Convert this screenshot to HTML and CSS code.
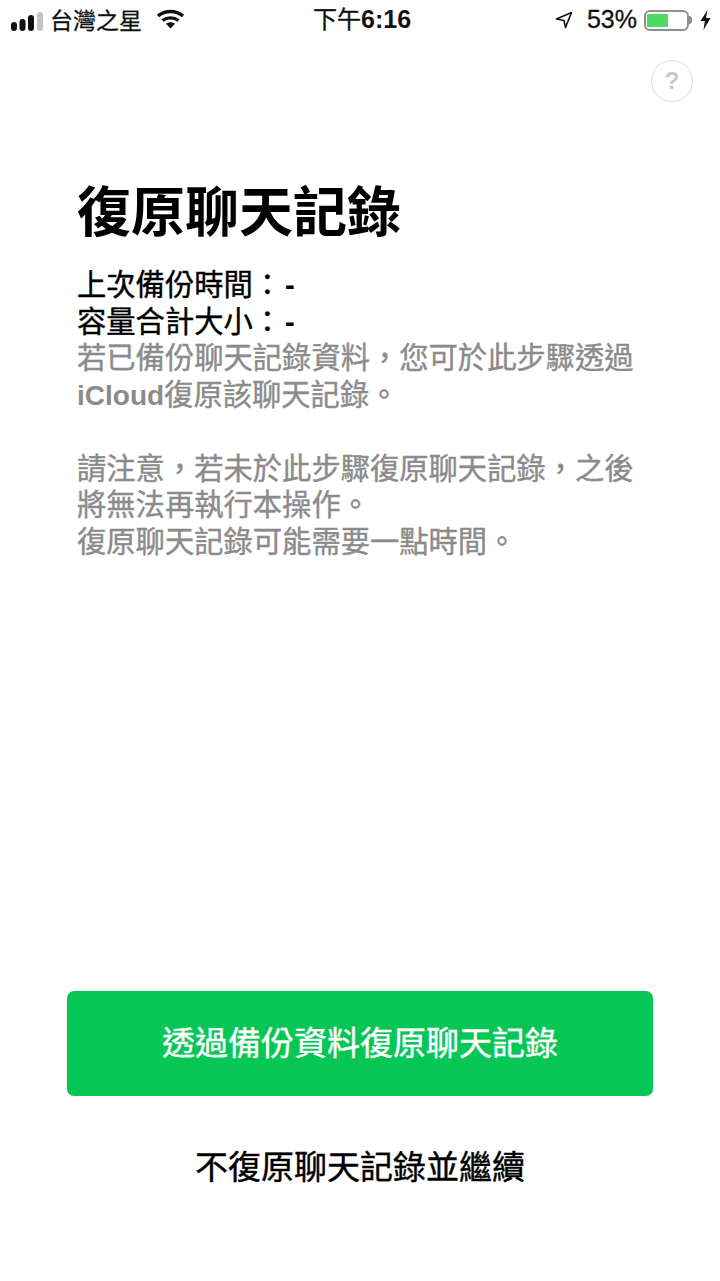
FILE: index.html
```html
<!DOCTYPE html>
<html lang="zh-Hant">
<head>
<meta charset="utf-8">
<title>復原聊天記錄</title>
<link rel="stylesheet" href="styles.css">
</head>
<body>
<div class="page">
  <header class="status">
    <div class="status-side">
      <svg class="signal" width="32" height="20" viewBox="0 0 32 20"><rect x="0" y="11" width="6" height="9" rx="3" fill="#111"/><rect x="8.500" y="8" width="6" height="12" rx="3" fill="#111"/><rect x="17" y="4" width="6" height="16" rx="3" fill="#111"/><rect x="26" y="1" width="6" height="19" rx="3" fill="#c4c4c4"/></svg>
      <span class="carrier">台灣之星</span>
      <svg class="wifi" width="27" height="20" viewBox="0 0 27 20"><path d="M1 7C8.500 1 18.500 1 26 7" fill="none" stroke="#111" stroke-width="3.400"/><path d="M5.500 11.500C10 8 17 8 21.500 11.500" fill="none" stroke="#111" stroke-width="3.400"/><path d="M9 14.800C11.500 12.800 15.500 12.800 18 14.800L13.500 19.500Z" fill="#111"/></svg>
    </div>
    <div class="clock">下午<span class="clock-digits">6:16</span></div>
    <div class="status-side status-right">
      <svg class="arrow" width="18" height="18" viewBox="0 0 18 18"><path d="M16.500 1.500L1.500 8L9 9.500L10.500 16.500Z" fill="none" stroke="#111" stroke-width="1.600" stroke-linejoin="round"/></svg>
      <span class="percent">53%</span>
      <div class="battery"><div class="level"></div></div>
      <div class="nub"></div>
      <svg class="bolt" width="11" height="20" viewBox="0 0 11 20"><path d="M7.500 0L0.500 11H4.800L3.500 20L10.500 8H6Z" fill="#111"/></svg>
    </div>
  </header>
  <div class="help-row"><div class="help">?</div></div>
  <main class="content">
    <h1 class="title">復原聊天記錄</h1>
    <div class="meta">上次備份時間：<span class="latin">-</span><br>容量合計大小：<span class="latin">-</span></div>
    <p class="note">若已備份聊天記錄資料，您可於此步驟透過<br><span class="latin latin-word">iCloud</span>復原該聊天記錄。</p>
    <p class="note note-gap">請注意，若未於此步驟復原聊天記錄，之後<br>將無法再執行本操作。<br>復原聊天記錄可能需要一點時間。</p>
  </main>
  <footer class="actions">
    <button class="primary">透過備份資料復原聊天記錄</button>
    <button class="secondary">不復原聊天記錄並繼續</button>
  </footer>
</div>
</body>
</html>
```
FILE: styles.css
```css
* { box-sizing: border-box; }
html, body { margin: 0; background: #fff; }
.page {
  width: 720px;
  height: 1281px;
  display: flex;
  flex-direction: column;
  font-family: "Liberation Sans", "Noto Sans CJK TC", sans-serif;
  overflow: hidden;
}
.status {
  height: 40px;
  display: flex;
  align-items: center;
  justify-content: space-between;
  position: relative;
  padding: 0 9px 0 11px;
  color: #111;
}
.status-side { display: flex; align-items: center; }
.signal { margin-right: 7px; margin-top: 1px; }
.carrier { font-size: 23px; margin-right: 15px; margin-bottom: 2px; -webkit-text-stroke: 0.3px #111; }
.wifi { margin-top: -2px; }
.clock {
  position: absolute;
  left: 313px;
  top: 4px;
  font-size: 24px;
  line-height: 30px;
  -webkit-text-stroke: 0.4px #111;
}
.clock-digits { font-size: 25px; font-weight: 700; -webkit-text-stroke: 0; }
.arrow { margin-right: 14px; }
.percent { font-size: 25px; margin-right: 7px; margin-bottom: 1px; -webkit-text-stroke: 0.3px #111; }
.battery {
  width: 45px;
  height: 21px;
  border: 2px solid #8e8e8e;
  border-radius: 6px;
  padding: 2px 1px;
}
.level { width: 21px; height: 13px; background: #4cd964; border-radius: 1px; }
.nub { width: 3px; height: 8px; background: #8e8e8e; margin: 0 8px 0 0; border-radius: 0 3px 3px 0; }
.help-row { display: flex; justify-content: flex-end; padding: 20px 27px 0 0; }
.help {
  width: 42px;
  height: 42px;
  border: 1px solid #dedede;
  border-radius: 50%;
  color: #c8c8c8;
  font-size: 24px;
  font-weight: 700;
  line-height: 40px;
  text-align: center;
}
.content { flex: 1; padding: 78px 60px 0 77px; }
.title {
  margin: 0 0 21px;
  font-size: 54px;
  line-height: 66px;
  font-weight: 700;
  color: #000;
}
.meta { font-size: 29.300px; line-height: 36.500px; color: #000; -webkit-text-stroke: 0.4px #000; }
.note { margin: 0; font-size: 29.300px; line-height: 36.500px; color: #8b8b8b; -webkit-text-stroke: 0.4px #8b8b8b; }
.note-gap { margin-top: 36.500px; }
.latin { font-weight: 700; -webkit-text-stroke: 0; }
.latin-word { font-size: 28px; }
.meta .latin { padding-left: 3px; }
.actions { display: flex; flex-direction: column; align-items: center; padding-bottom: 90px; }
.primary {
  width: 586px;
  height: 105px;
  background: #06c755;
  color: #fff;
  border: 0;
  border-radius: 7px;
  padding-bottom: 6px;
  font: 400 33px "Liberation Sans", "Noto Sans CJK TC", sans-serif;
  -webkit-text-stroke: 0.4px #fff;
}
.secondary {
  margin-top: 49px;
  height: 46px;
  padding: 0;
  background: none;
  border: 0;
  color: #000;
  font: 400 33px/46px "Liberation Sans", "Noto Sans CJK TC", sans-serif;
  -webkit-text-stroke: 0.4px #000;
}
```
